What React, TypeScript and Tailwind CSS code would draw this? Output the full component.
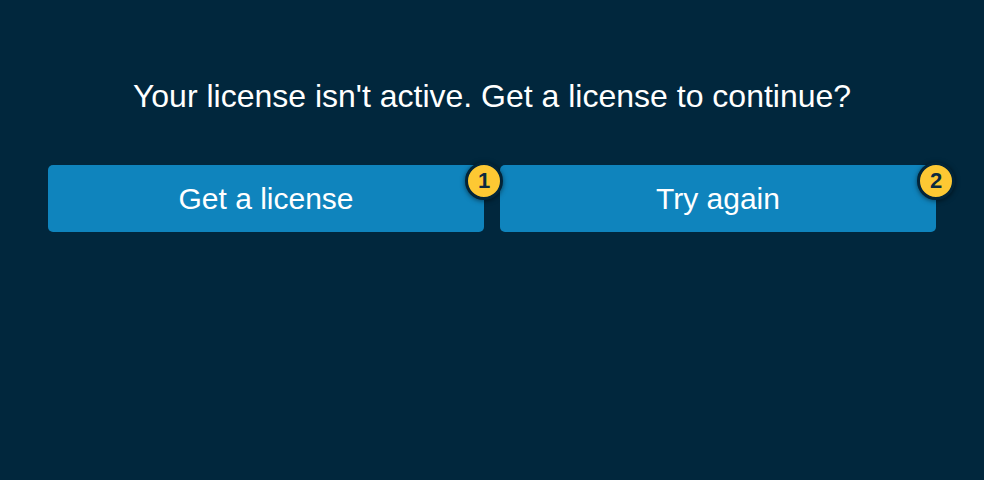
const font = { fontFamily: '"Liberation Sans", Arial, sans-serif' };

function Badge({ n }: { n: number }) {
  return (
    <span className="absolute -top-[3px] -right-[19px] z-10 flex h-[38px] w-[38px] items-center justify-center rounded-full border-[3px] border-[#022438] bg-[#fdc833] text-[22px] leading-none font-bold text-[#0b2a3f] shadow-[0_1px_5px_rgba(0,0,0,0.55)]">
      {n}
    </span>
  );
}

function ActionButton({ label, n }: { label: string; n: number }) {
  return (
    <div className="relative flex-1">
      <button className="flex h-[67px] w-full items-center justify-center rounded-[5px] bg-[#0f84bd] text-[30px] text-white">
        {label}
      </button>
      <Badge n={n} />
    </div>
  );
}

export default function App() {
  return (
    <div className="h-[480px] w-[984px] bg-[#01273d] px-12 pt-[76px]" style={font}>
      <p className="text-center text-[32px] leading-[40px] text-white">
        Your license isn't active. Get a license to continue?
      </p>
      <div className="mt-[49px] flex gap-4">
        <ActionButton label="Get a license" n={1} />
        <ActionButton label="Try again" n={2} />
      </div>
    </div>
  );
}
